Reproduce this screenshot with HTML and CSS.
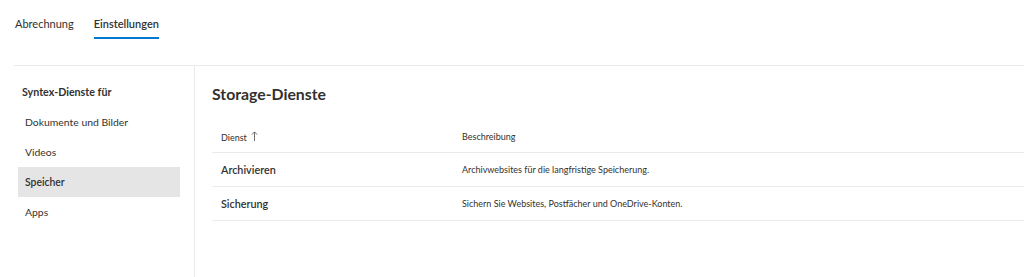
FILE: index.html
```html
<!DOCTYPE html>
<html lang="de">
<head>
    <meta charset="UTF-8">
    <meta name="viewport" content="width=device-width, initial-scale=1.0">
    <title>Einstellungen</title>
    <link rel="stylesheet" href="styles.css">
</head>
<body>
    <div class="page">
        <nav class="tabs">
            <div class="tab">Abrechnung</div>
            <div class="tab active">Einstellungen</div>
        </nav>

        <div class="content">
            <aside class="sidebar">
                <div class="sidebar-title">Syntex-Dienste für</div>
                <div class="side-item">Dokumente und Bilder</div>
                <div class="side-item">Videos</div>
                <div class="side-item selected">Speicher</div>
                <div class="side-item">Apps</div>
            </aside>

            <main class="main">
                <h2>Storage-Dienste</h2>

                <div class="table">
                    <div class="row head">
                        <div class="cell">
                            Dienst
                            <svg class="arrow" width="7" height="10" viewBox="0 0 7 10">
                                <path d="M3.5 10V1M0.8 3.6L3.5 0.9L6.2 3.6" fill="none" stroke="#605e5c" stroke-width="0.9"/>
                            </svg>
                        </div>
                        <div class="cell">Beschreibung</div>
                    </div>
                    <div class="row">
                        <div class="cell name">Archivieren</div>
                        <div class="cell desc">Archivwebsites für die langfristige Speicherung.</div>
                    </div>
                    <div class="row">
                        <div class="cell name">Sicherung</div>
                        <div class="cell desc">Sichern Sie Websites, Postfächer und OneDrive-Konten.</div>
                    </div>
                </div>
            </main>
        </div>
    </div>
</body>
</html>
```

FILE: styles.css
```css
body {
    margin: 0;
    padding: 0;
    font-family: Lato, "Open Sans", sans-serif;
    color: #323130;
    background: #fff;
}

.page {
    display: flex;
    flex-direction: column;
    height: 100vh;
}

.tabs {
    display: flex;
    gap: 20px;
    padding: 0 0 0 15px;
    height: 65px;
}

.tab {
    font-size: 11px;
    line-height: 16px;
    padding-top: 16px;
    padding-bottom: 5px;
    align-self: flex-start;
    border-bottom: 2px solid transparent;
}

.tab.active {
    font-weight: 600;
    border-bottom-color: #0078d4;
}

.content {
    flex: 1;
    display: flex;
    margin-left: 14px;
    border-top: 1px solid #edebe9;
}

.sidebar {
    width: 162px;
    padding: 18px 14px 0 4px;
    border-right: 1px solid #edebe9;
}

.sidebar-title {
    font-size: 10.7px;
    font-weight: 700;
    line-height: 16px;
    padding-left: 4px;
    margin-bottom: 7px;
}

.side-item {
    font-size: 10.4px;
    line-height: 30px;
    height: 30px;
    padding-left: 7px;
}

.side-item.selected {
    background: #e5e5e5;
    font-weight: 600;
}

.main {
    flex: 1;
    padding: 18px 0 0 17px;
}

h2 {
    margin: 0 0 17px 0;
    font-size: 15.8px;
    line-height: 20px;
    font-weight: 700;
}

.row {
    display: grid;
    grid-template-columns: 241px 1fr;
    border-bottom: 1px solid #edebe9;
    align-items: center;
    height: 33px;
}

.row.head {
    height: 31px;
}

.cell {
    padding-left: 9px;
}

.head .cell {
    font-size: 9px;
}

.arrow {
    margin-left: 2px;
}

.name {
    font-size: 10.8px;
    font-weight: 600;
}

.desc {
    font-size: 9px;
}
```
